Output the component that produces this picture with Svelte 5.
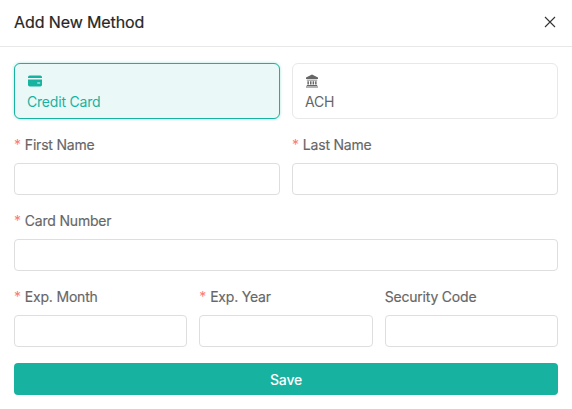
<script>
  let method = $state("card");
</script>

<div class="modal">
  <header class="head">
    <h2>Add New Method</h2>
    <button class="close" aria-label="Close">
      <svg width="12" height="12" viewBox="0 0 12 12" fill="none" stroke="#333" stroke-width="1.1">
        <path d="M1 1l10 10M11 1L1 11" />
      </svg>
    </button>
  </header>

  <form class="body" onsubmit={(e) => e.preventDefault()}>
    <div class="methods">
      <button type="button" class="method" class:active={method === "card"} onclick={() => (method = "card")}>
        <svg class="card-icon" width="14" height="14" viewBox="0 0 14 14" fill="currentColor">
          <path d="M0 3.2A1.7 1.7 0 0 1 1.7 1.5h10.6A1.7 1.7 0 0 1 14 3.2V4H0zM0 5.6h14v5.2a1.7 1.7 0 0 1-1.7 1.7H1.7A1.7 1.7 0 0 1 0 10.8zM9.2 8.6v1h3v-1z" fill-rule="evenodd" />
        </svg>
        <span>Credit Card</span>
      </button>
      <button type="button" class="method" class:active={method === "ach"} onclick={() => (method = "ach")}>
        <svg width="14" height="14" viewBox="0 0 14 14" fill="currentColor">
          <path d="M7 .5L13 3.6V5H1V3.6zM1.8 5.8h10.4v.8H1.8zM2.4 7.2h1.5v3.2H2.4zM5 7.2h1.5v3.2H5zM7.6 7.2h1.5v3.2H7.6zM10.1 7.2h1.5v3.2h-1.5zM1.8 11h10.4v.9H1.8zM1 12.4h12v1.1H1z" />
        </svg>
        <span>ACH</span>
      </button>
    </div>

    <div class="row two">
      <label class="field">
        <span class="lbl"><i>*</i>First Name</span>
        <input type="text" />
      </label>
      <label class="field">
        <span class="lbl"><i>*</i>Last Name</span>
        <input type="text" />
      </label>
    </div>

    <div class="row">
      <label class="field">
        <span class="lbl"><i>*</i>Card Number</span>
        <input type="text" />
      </label>
    </div>

    <div class="row three">
      <label class="field">
        <span class="lbl"><i>*</i>Exp. Month</span>
        <input type="text" />
      </label>
      <label class="field">
        <span class="lbl"><i>*</i>Exp. Year</span>
        <input type="text" />
      </label>
      <label class="field">
        <span class="lbl">Security Code</span>
        <input type="text" />
      </label>
    </div>

    <button type="submit" class="save">Save</button>
  </form>
</div>

<style>
  :global(body) {
    background: #fff;
    font-family: Inter, "Liberation Sans", sans-serif;
  }

  .modal {
    width: 572px;
    height: 409px;
    box-sizing: border-box;
    background: #fff;
    overflow: hidden;
  }

  .head {
    height: 47px;
    box-sizing: border-box;
    border-bottom: 1px solid #e8e8e8;
    padding: 0 16px 2px 14px;
    display: flex;
    align-items: center;
    justify-content: space-between;
  }

  h2 {
    margin: 0;
    font-size: 16px;
    font-weight: 400;
    letter-spacing: -0.1px;
    color: #262626;
    -webkit-text-stroke: 0.2px #262626;
  }

  .close {
    border: 0;
    background: none;
    padding: 0;
    display: flex;
  }

  .body {
    padding: 16px 14px 0;
    display: flex;
    flex-direction: column;
  }

  .methods {
    display: grid;
    grid-template-columns: 1fr 1fr;
    gap: 12px;
    margin-bottom: 16px;
  }

  .method {
    height: 56px;
    box-sizing: border-box;
    border: 1px solid #e8e8e8;
    border-radius: 6px;
    background: #fff;
    color: #666;
    padding: 10px 12px 0;
    display: flex;
    flex-direction: column;
    align-items: flex-start;
    gap: 4px;
    font: inherit;
    font-size: 14px;
    letter-spacing: -0.2px;
    line-height: 20px;
  }

  .method.active {
    border-color: #17b3a0;
    background: #ebf8f8;
    color: #17b3a0;
    box-shadow: 0 0 3px rgba(23, 179, 160, 0.4);
  }

  .card-icon {
    margin-left: 1px;
  }

  .row {
    display: grid;
    gap: 12px;
    margin-bottom: 16px;
  }

  .two {
    grid-template-columns: 1fr 1fr;
  }

  .three {
    grid-template-columns: repeat(3, 1fr);
  }

  .field {
    display: flex;
    flex-direction: column;
    gap: 8px;
  }

  .lbl {
    font-size: 14px;
    line-height: 20px;
    letter-spacing: -0.2px;
    color: #666;
    -webkit-text-stroke: 0.15px #666;
  }

  .lbl i {
    font-style: normal;
    color: #f77;
    margin-right: 4px;
    -webkit-text-stroke: 0;
  }

  input {
    height: 32px;
    box-sizing: border-box;
    width: 100%;
    border: 1px solid #dedede;
    border-radius: 4px;
    background: #fff;
  }

  .save {
    height: 32px;
    border: 0;
    border-radius: 4px;
    background: #17b3a0;
    color: #fff;
    font: inherit;
    font-size: 14px;
    font-weight: 500;
    letter-spacing: -0.2px;
  }
</style>
